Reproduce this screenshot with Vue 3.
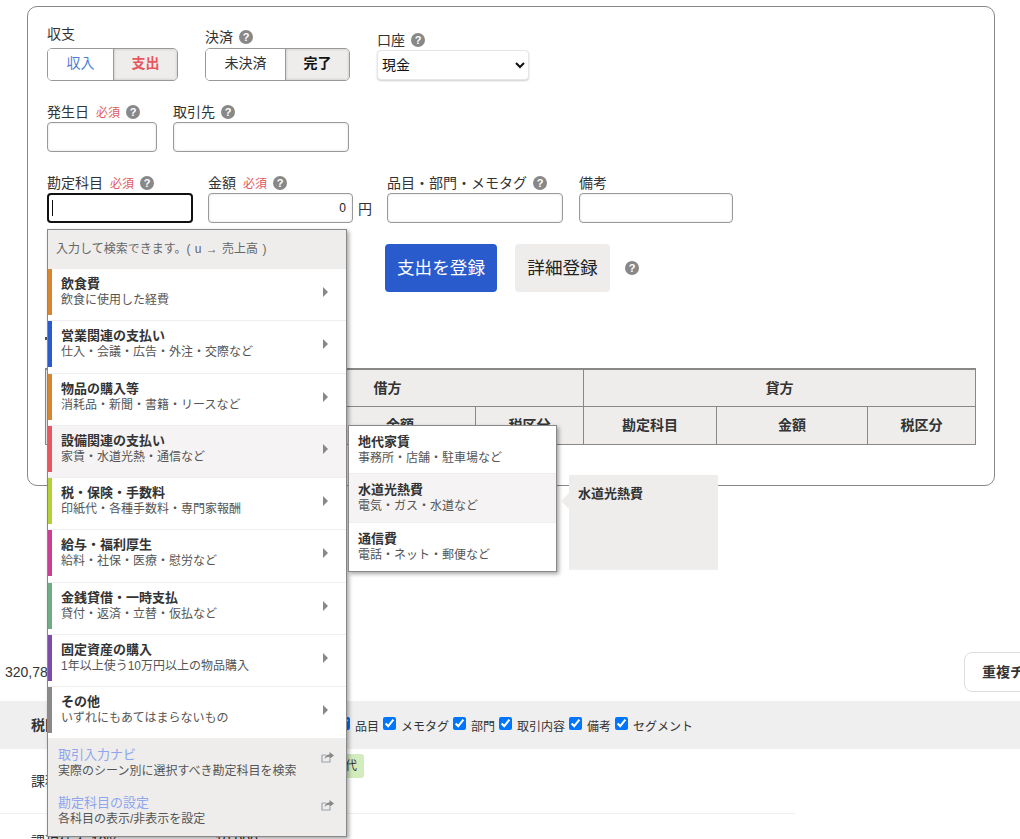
<template>
  <div class="page">
    <section class="card">
      <div class="row row-top">
        <div class="field">
          <div class="label label-gap">収支</div>
          <div class="toggle">
            <button class="toggle-btn income">収入</button>
            <button class="toggle-btn expense on">支出</button>
          </div>
        </div>
        <div class="field">
          <div class="label label-gap-sm">決済 <span class="help">?</span></div>
          <div class="toggle">
            <button class="toggle-btn wide">未決済</button>
            <button class="toggle-btn done on">完了</button>
          </div>
        </div>
        <div class="field select-field">
          <div class="label">口座 <span class="help">?</span></div>
          <select class="account">
            <option>現金</option>
          </select>
        </div>
      </div>

      <div class="row row-second">
        <div class="field">
          <div class="label">発生日 <span class="required">必須</span> <span class="help">?</span></div>
          <input class="input w-date" type="text" />
        </div>
        <div class="field">
          <div class="label">取引先 <span class="help">?</span></div>
          <input class="input w-partner" type="text" />
        </div>
      </div>

      <div class="row row-third">
        <div class="field">
          <div class="label">勘定科目 <span class="required">必須</span> <span class="help">?</span></div>
          <div class="focus-wrap">
            <input class="input w-account focused" type="text" />
            <span class="caret"></span>
          </div>
        </div>
        <div class="field">
          <div class="label">金額 <span class="required">必須</span> <span class="help">?</span></div>
          <div class="amount">
            <input class="input w-amount" type="text" value="0" />
            <span>円</span>
          </div>
        </div>
        <div class="field">
          <div class="label">品目・部門・メモタグ <span class="help">?</span></div>
          <input class="input w-tag" type="text" />
        </div>
        <div class="field note-field">
          <div class="label">備考</div>
          <input class="input w-note" type="text" />
        </div>
      </div>

      <div class="actions">
        <button class="btn-primary">支出を登録</button>
        <button class="btn-detail">詳細登録</button>
        <span class="help">?</span>
      </div>

      <div class="preview-mark"></div>

      <table class="journal">
        <colgroup>
          <col v-for="(w, i) in colWidths" :key="i" :style="{ width: w + 'px' }" />
        </colgroup>
        <thead>
          <tr>
            <th rowspan="2"></th>
            <th colspan="3">借方</th>
            <th colspan="3">貸方</th>
          </tr>
          <tr>
            <th>勘定科目</th>
            <th>金額</th>
            <th>税区分</th>
            <th>勘定科目</th>
            <th>金額</th>
            <th>税区分</th>
          </tr>
        </thead>
      </table>
    </section>

    <div class="summary">
      <span class="total">320,780</span>
      <button class="btn-check">重複チェック</button>
    </div>

    <div class="filter-bar">
      <strong class="filter-title">税区分</strong>
      <label v-for="name in columns" :key="name" class="check">
        <input type="checkbox" checked />
        <span>{{ name }}</span>
      </label>
    </div>

    <div class="list-row first">
      <span class="tax">課税売上 10%</span>
      <span class="tag">地代</span>
    </div>
    <div class="list-row second">
      <span class="tax">課税仕入 10%</span>
      <span class="price">10,000</span>
    </div>

    <!-- account dropdown -->
    <div class="menu">
      <div class="menu-head">入力して検索できます。( u → 売上高 )</div>
      <div
        v-for="item in categories"
        :key="item.title"
        class="menu-item"
        :class="{ hover: item.hover }"
      >
        <div class="menu-inner" :style="{ borderLeftColor: item.color }">
          <div class="item-text">
            <div class="item-title">{{ item.title }}</div>
            <div class="item-sub">{{ item.sub }}</div>
          </div>
          <span class="arrow"></span>
        </div>
      </div>
      <div class="menu-foot">
        <div v-for="link in links" :key="link.title" class="foot-item">
          <div>
            <div class="foot-title">{{ link.title }}</div>
            <div class="item-sub">{{ link.sub }}</div>
          </div>
          <svg class="share" width="13" height="12" viewBox="0 0 13 12">
            <path d="M1 4h4M1 4v7h8V8" fill="none" stroke="#9aa3b0" stroke-width="1.2" />
            <path d="M3.5 8C4 5 6 3.6 8.5 3.6V1L13 4.5 8.5 8V5.8C6.5 5.8 5 6.5 3.5 8z" fill="#888" />
          </svg>
        </div>
      </div>
    </div>

    <div class="submenu">
      <div
        v-for="sub in subItems"
        :key="sub.title"
        class="sub-item"
        :class="{ hover: sub.hover }"
      >
        <div class="item-title">{{ sub.title }}</div>
        <div class="item-sub">{{ sub.sub }}</div>
      </div>
    </div>

    <div class="tip">水道光熱費</div>
  </div>
</template>

<script setup>
const colWidths = [146, 133, 151, 108, 133, 151, 108]

const columns = ["品目", "メモタグ", "部門", "取引内容", "備考", "セグメント"]

const categories = [
  { title: "飲食費", sub: "飲食に使用した経費", color: "#d8852f" },
  { title: "営業関連の支払い", sub: "仕入・会議・広告・外注・交際など", color: "#2a5bcc" },
  { title: "物品の購入等", sub: "消耗品・新聞・書籍・リースなど", color: "#d8852f" },
  { title: "設備関連の支払い", sub: "家賃・水道光熱・通信など", color: "#e8565f", hover: true },
  { title: "税・保険・手数料", sub: "印紙代・各種手数料・専門家報酬", color: "#b5d136" },
  { title: "給与・福利厚生", sub: "給料・社保・医療・慰労など", color: "#cc3d94" },
  { title: "金銭貸借・一時支払", sub: "貸付・返済・立替・仮払など", color: "#6fab84" },
  { title: "固定資産の購入", sub: "1年以上使う10万円以上の物品購入", color: "#7d4ba8" },
  { title: "その他", sub: "いずれにもあてはまらないもの", color: "#8a8a8a" },
]

const links = [
  { title: "取引入力ナビ", sub: "実際のシーン別に選択すべき勘定科目を検索" },
  { title: "勘定科目の設定", sub: "各科目の表示/非表示を設定" },
]

const subItems = [
  { title: "地代家賃", sub: "事務所・店舗・駐車場など" },
  { title: "水道光熱費", sub: "電気・ガス・水道など", hover: true },
  { title: "通信費", sub: "電話・ネット・郵便など" },
]
</script>

<style>
html,
body {
  margin: 0;
  overflow: hidden;
  background: #fff;
}
</style>

<style scoped>
.page {
  position: relative;
  height: 839px;
  overflow: hidden;
  font-family: "Liberation Sans", "Noto Sans CJK JP", sans-serif;
  font-size: 14px;
  color: #333;
}
.card {
  box-sizing: border-box;
  width: 968px;
  height: 480px;
  margin: 6px 0 0 27px;
  padding: 1px 19px 0;
  border: 1px solid #888;
  border-radius: 10px;
}
.row {
  display: flex;
  gap: 15px;
}
.row-top {
  align-items: flex-end;
  gap: 27px;
  margin-top: 16px;
}
.row-second {
  margin-top: 21px;
  gap: 16px;
}
.row-third {
  margin-top: 21px;
}
.label {
  display: flex;
  align-items: center;
  gap: 6px;
  box-sizing: border-box;
  height: 20px;
  padding-bottom: 2px;
  white-space: nowrap;
}
.label-gap {
  margin-bottom: 4px;
}
.label-gap-sm {
  margin-bottom: 1px;
}
.select-field {
  margin-bottom: 1px;
}
.note-field {
  margin-left: 1px;
}
.required {
  margin-left: 1px;
  color: #e25a5f;
  font-size: 12px;
}
.help {
  display: inline-block;
  width: 14px;
  height: 14px;
  border-radius: 50%;
  background: #888;
  color: #fff;
  font-size: 11px;
  font-weight: 700;
  line-height: 14px;
  text-align: center;
}
.label .help {
  margin-top: 2px;
}
.toggle {
  display: flex;
  height: 33px;
  box-sizing: border-box;
  border: 1px solid #999;
  border-radius: 5px;
  overflow: hidden;
  background: #fff;
}
.toggle-btn {
  width: 65px;
  padding: 0 0 6px;
  border: 0;
  background: #fff;
  font: inherit;
  color: #333;
}
.toggle-btn.wide {
  width: 79px;
}
.toggle-btn.on {
  width: 64px;
  border-left: 1px solid #999;
  background: #eeedeb;
  font-weight: 700;
  box-shadow: inset 0 0 3px rgba(0, 0, 0, 0.2);
}
.income {
  color: #4f7fd6;
}
.expense {
  color: #e8565f;
}
.done {
  color: #111;
}
.account {
  display: block;
  width: 152px;
  height: 30px;
  padding: 0;
  border: 1px solid #e6e6e6;
  border-radius: 4px;
  background: #fff;
  box-shadow: 0 1px 2px rgba(0, 0, 0, 0.2);
  font: inherit;
  color: #111;
}
.input {
  display: block;
  box-sizing: border-box;
  height: 30px;
  padding: 0 6px;
  border: 1px solid #999;
  border-radius: 4px;
  background: #fff;
  box-shadow: inset 0 0 3px rgba(0, 0, 0, 0.12);
  font: 12px "Liberation Sans", sans-serif;
  color: #222;
  outline: none;
}
.w-date {
  width: 110px;
}
.w-partner {
  width: 176px;
}
.w-account {
  width: 146px;
}
.w-amount {
  width: 145px;
  text-align: right;
}
.w-tag {
  width: 176px;
}
.w-note {
  width: 154px;
}
.focused {
  border: 2px solid #111;
  box-shadow: none;
}
.focus-wrap {
  position: relative;
}
.caret {
  position: absolute;
  left: 5px;
  top: 7px;
  width: 1px;
  height: 16px;
  background: #111;
}
.amount {
  display: flex;
  align-items: center;
  gap: 5px;
}
.actions {
  display: flex;
  align-items: center;
  margin: 21px 0 0 338px;
}
.btn-primary,
.btn-detail {
  height: 48px;
  padding: 0 0 3px;
  border: 0;
  border-radius: 4px;
  font: inherit;
  font-size: 17.6px;
}
.btn-primary {
  width: 112px;
  background: #2a5bcc;
  color: #fff;
}
.btn-detail {
  width: 95px;
  margin: 0 15px 0 18px;
  background: #eeedeb;
  color: #222;
}
.preview-mark {
  width: 2px;
  height: 3px;
  margin: 45px 0 0 -2px;
  background: #555;
}
.journal {
  width: 930px;
  margin: 28px 0 0 -2px;
  border-collapse: collapse;
  table-layout: fixed;
  border-top: 2px solid #888;
}
.journal th {
  box-sizing: border-box;
  height: 37.5px;
  padding: 0 0 3px;
  border: 1px solid #888;
  background: #eeedeb;
  font-size: 14px;
  font-weight: 700;
  color: #333;
}
.summary {
  display: flex;
  align-items: center;
  height: 40px;
  margin-top: 166px;
  white-space: nowrap;
}
.total {
  width: 959px;
  padding-left: 5px;
  flex: none;
}
.btn-check {
  flex: none;
  width: 120px;
  height: 40px;
  padding: 0 0 2px 17px;
  border: 1px solid #ddd;
  border-radius: 8px;
  background: #fff;
  font: inherit;
  font-weight: 700;
  text-align: left;
  color: #333;
}
.filter-bar {
  display: flex;
  align-items: center;
  gap: 4px;
  height: 48px;
  margin-top: 9px;
  padding-left: 31px;
  background: #efefef;
  font-size: 12px;
}
.filter-title {
  width: 302px;
  margin-bottom: 3px;
  font-size: 14px;
}
.check {
  display: flex;
  align-items: flex-start;
  gap: 5px;
}
.check input {
  width: 13px;
  height: 13px;
  margin: 0;
}
.list-row {
  display: flex;
  align-items: center;
  box-sizing: border-box;
  width: 795px;
  padding-left: 31px;
}
.list-row.first {
  height: 65px;
  border-bottom: 1px solid #eee;
}
.list-row.second {
  height: 55px;
}
.tag {
  align-self: flex-start;
  margin: 5px 0 0 119px;
  padding: 0 7px 0 83px;
  height: 24px;
  line-height: 24px;
  border-radius: 3px;
  background: #d3ecbd;
  font-size: 12px;
}
.tax {
  width: 100px;
  padding-bottom: 3px;
}
.price {
  margin-left: 84px;
  padding-bottom: 3px;
}
.menu {
  position: absolute;
  left: 47px;
  top: 229px;
  box-sizing: border-box;
  width: 300px;
  border: 1px solid #888;
  background: #fff;
  box-shadow: 2px 2px 4px rgba(0, 0, 0, 0.35);
}
.menu-head {
  height: 39px;
  padding-left: 8px;
  background: #eeedeb;
  font-size: 12px;
  line-height: 38px;
  word-spacing: 1px;
  color: #666;
}
.menu-item {
  box-sizing: border-box;
  height: 52.25px;
  border-bottom: 1px solid #eee;
}
.menu-item.hover {
  background: #f5f3f3;
}
.menu-inner {
  display: flex;
  align-items: center;
  justify-content: space-between;
  box-sizing: border-box;
  height: 46px;
  padding: 0 18px 0 9px;
  border-left: 4px solid;
}
.item-text {
  padding-bottom: 1px;
}
.item-title {
  margin-bottom: 1px;
  font-size: 13px;
  font-weight: 700;
  line-height: 17px;
  color: #333;
}
.item-sub {
  font-size: 12px;
  line-height: 15px;
  color: #555;
  white-space: nowrap;
}
.arrow {
  width: 0;
  height: 0;
  border-left: 5px solid #888;
  border-top: 5px solid transparent;
  border-bottom: 5px solid transparent;
}
.menu-foot {
  padding-bottom: 1px;
  background: #eeedeb;
}
.foot-item {
  display: flex;
  align-items: flex-start;
  justify-content: space-between;
  box-sizing: border-box;
  height: 48px;
  padding: 7px 12px 0 10px;
}
.foot-title {
  margin-bottom: 1px;
  font-size: 13px;
  line-height: 17px;
  color: #8ea6ee;
}
.share {
  margin-top: 5px;
}
.submenu {
  position: absolute;
  left: 348px;
  top: 425px;
  box-sizing: border-box;
  width: 209px;
  border: 1px solid #888;
  background: #fff;
  box-shadow: 2px 2px 4px rgba(0, 0, 0, 0.35);
}
.sub-item {
  box-sizing: border-box;
  height: 48.3px;
  padding: 7px 9px 0;
  border-bottom: 1px solid #eee;
}
.sub-item:last-child {
  border-bottom: 0;
}
.sub-item.hover {
  background: #f5f3f3;
}
.tip {
  position: absolute;
  left: 569px;
  top: 475px;
  box-sizing: border-box;
  width: 149px;
  height: 94px;
  padding: 10px 9px;
  background: #eeedeb;
  font-size: 13px;
  font-weight: 700;
  line-height: 17px;
  box-shadow: 0 1px 0 #f0f0f0;
}
.tip::before {
  content: "";
  position: absolute;
  left: -8px;
  top: 18px;
  border-right: 8px solid #eeedeb;
  border-top: 8px solid transparent;
  border-bottom: 8px solid transparent;
}
</style>
